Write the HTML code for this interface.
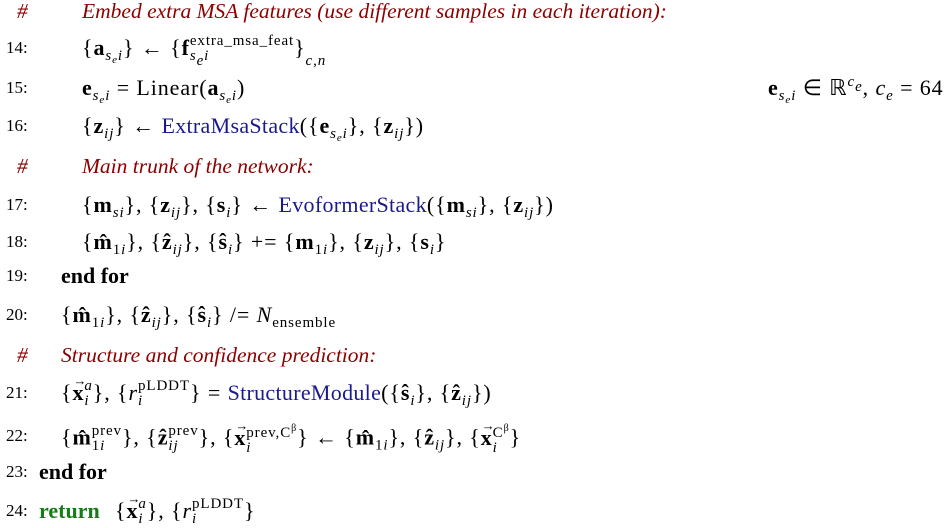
<!DOCTYPE html>
<html><head><meta charset="utf-8"><style>
body{margin:0;width:951px;height:527px;background:#fff;position:relative;overflow:hidden;font-family:"Liberation Serif",serif;color:#000}
.l{position:absolute;left:0;height:28px;line-height:28px;font-size:22px;white-space:nowrap}
.m{letter-spacing:0.9px}
.n{position:absolute;left:6px;font-size:17px;letter-spacing:0}
.c{color:#8b0000;font-style:italic;font-size:21.5px}
.b{color:#1a1a8c;letter-spacing:0.3px}
.g{color:#1a7a1a;font-weight:bold}
.k{font-weight:bold}
.bf{font-weight:bold}
i{font-style:italic}
sub{font-size:15px;line-height:0;vertical-align:-5px}
sup{font-size:15px;line-height:0;vertical-align:9px}
sub sub{font-size:11px;vertical-align:-3px}
.ss{display:inline-flex;flex-direction:column;vertical-align:middle;font-size:15px;line-height:15px;position:relative;top:-1px}
.ss>span{display:block}
.v{display:inline-block;position:relative;font-weight:bold}
.v::before{content:"→";position:absolute;left:1px;top:-12px;font-size:13px;font-weight:normal}
.sm{font-size:10px;vertical-align:6px}
</style></head><body>
<div class="l c" style="top:-3px"><span style="position:absolute;left:17px">#</span><span style="position:absolute;left:82px">Embed extra MSA features (use different samples in each iteration):</span></div>
<div class="l m" style="top:34px"><span class="n">14:</span><span style="position:absolute;left:82px">{<span class="bf">a</span><sub><i>s</i><sub><i>e</i></sub><i>i</i></sub>} ← {<span class="bf">f</span><span class="ss"><span>extra_msa_feat</span><span><i>s</i><sub><i>e</i></sub><i>i</i></span></span>}<sub style="vertical-align:-10px"><i>c,n</i></sub></span></div>
<div class="l m" style="top:74px"><span class="n">15:</span><span style="position:absolute;left:82px"><span class="bf">e</span><sub><i>s</i><sub><i>e</i></sub><i>i</i></sub> = Linear(<span class="bf">a</span><sub><i>s</i><sub><i>e</i></sub><i>i</i></sub>)</span><span style="position:absolute;left:768px"><span class="bf">e</span><sub><i>s</i><sub><i>e</i></sub><i>i</i></sub> ∈ ℝ<sup><i>c</i><sub><i>e</i></sub></sup>, <i>c</i><sub><i>e</i></sub> = 64</span></div>
<div class="l m" style="top:112px"><span class="n">16:</span><span style="position:absolute;left:82px">{<span class="bf">z</span><sub><i>ij</i></sub>} ← <span class="b">ExtraMsaStack</span>({<span class="bf">e</span><sub><i>s</i><sub><i>e</i></sub><i>i</i></sub>}, {<span class="bf">z</span><sub><i>ij</i></sub>})</span></div>
<div class="l c" style="top:152px"><span style="position:absolute;left:17px">#</span><span style="position:absolute;left:82px">Main trunk of the network:</span></div>
<div class="l m" style="top:191px"><span class="n">17:</span><span style="position:absolute;left:82px">{<span class="bf">m</span><sub><i>si</i></sub>}, {<span class="bf">z</span><sub><i>ij</i></sub>}, {<span class="bf">s</span><sub><i>i</i></sub>} ← <span class="b">EvoformerStack</span>({<span class="bf">m</span><sub><i>si</i></sub>}, {<span class="bf">z</span><sub><i>ij</i></sub>})</span></div>
<div class="l m" style="top:228px"><span class="n">18:</span><span style="position:absolute;left:82px">{<span class="bf">m̂</span><sub>1<i>i</i></sub>}, {<span class="bf">ẑ</span><sub><i>ij</i></sub>}, {<span class="bf">ŝ</span><sub><i>i</i></sub>} += {<span class="bf">m</span><sub>1<i>i</i></sub>}, {<span class="bf">z</span><sub><i>ij</i></sub>}, {<span class="bf">s</span><sub><i>i</i></sub>}</span></div>
<div class="l" style="top:262px"><span class="n">19:</span><span class="k" style="position:absolute;left:61px">end for</span></div>
<div class="l m" style="top:301px"><span class="n">20:</span><span style="position:absolute;left:61px">{<span class="bf">m̂</span><sub>1<i>i</i></sub>}, {<span class="bf">ẑ</span><sub><i>ij</i></sub>}, {<span class="bf">ŝ</span><sub><i>i</i></sub>} /= <i>N</i><sub>ensemble</sub></span></div>
<div class="l c" style="top:341px"><span style="position:absolute;left:17px">#</span><span style="position:absolute;left:61px">Structure and confidence prediction:</span></div>
<div class="l m" style="top:379px"><span class="n">21:</span><span style="position:absolute;left:61px">{<span class="v">x</span><span class="ss"><span><i>a</i></span><span><i>i</i></span></span>}, {<i>r</i><span class="ss"><span>pLDDT</span><span><i>i</i></span></span>} = <span class="b">StructureModule</span>({<span class="bf">ŝ</span><sub><i>i</i></sub>}, {<span class="bf">ẑ</span><sub><i>ij</i></sub>})</span></div>
<div class="l m" style="top:422px"><span class="n">22:</span><span style="position:absolute;left:61px">{<span class="bf">m̂</span><span class="ss"><span>prev</span><span>1<i>i</i></span></span>}, {<span class="bf">ẑ</span><span class="ss"><span>prev</span><span><i>ij</i></span></span>}, {<span class="v">x</span><span class="ss"><span>prev,C<span class="sm">β</span></span><span><i>i</i></span></span>} ← {<span class="bf">m̂</span><sub>1<i>i</i></sub>}, {<span class="bf">ẑ</span><sub><i>ij</i></sub>}, {<span class="v">x</span><span class="ss"><span>C<span class="sm">β</span></span><span><i>i</i></span></span>}</span></div>
<div class="l" style="top:458px"><span class="n">23:</span><span class="k" style="position:absolute;left:39px">end for</span></div>
<div class="l m" style="top:497px"><span class="n">24:</span><span class="g" style="position:absolute;left:39px;letter-spacing:0">return</span><span style="position:absolute;left:115px">{<span class="v">x</span><span class="ss"><span><i>a</i></span><span><i>i</i></span></span>}, {<i>r</i><span class="ss"><span>pLDDT</span><span><i>i</i></span></span>}</span></div>
</body></html>
